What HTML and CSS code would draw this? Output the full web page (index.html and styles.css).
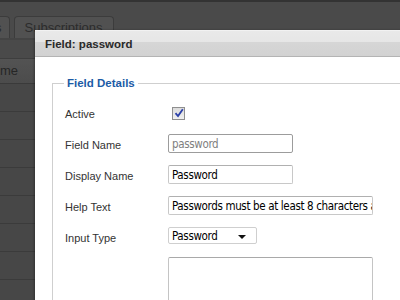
FILE: index.html
```html
<!DOCTYPE html>
<html lang="en">

<head>
    <meta charset="UTF-8">
    <meta name="viewport" content="width=device-width, initial-scale=1.0">
    <title>Field: password</title>
    <link rel="stylesheet" href="styles.css">
</head>

<body>
    <div class="topline"></div>
    <div class="tabs">
        <div class="tab tab-cut">s</div>
        <div class="tab">Subscriptions</div>
    </div>
    <div class="grid">
        <div class="grid-head">me</div>
        <div class="grid-row"></div>
        <div class="grid-row"></div>
        <div class="grid-row"></div>
        <div class="grid-row"></div>
        <div class="grid-row"></div>
        <div class="grid-row"></div>
        <div class="grid-row"></div>
        <div class="grid-row"></div>
    </div>

    <!-- dialog over the list -->
    <div class="dialog">
        <div class="dialog-title">Field: password</div>
        <div class="dialog-body">
            <fieldset class="details">
                <legend>Field Details</legend>
                <div class="row first">
                    <label>Active</label>
                    <span class="check">
                        <svg width="10" height="10" viewBox="0 0 10 10">
                            <path d="M1.5 5.2 L4 8 L8.8 1.2" fill="none" stroke="#2b3fa8" stroke-width="1.8"/>
                        </svg>
                    </span>
                </div>
                <div class="row">
                    <label>Field Name</label>
                    <div class="input disabled">password</div>
                </div>
                <div class="row">
                    <label>Display Name</label>
                    <div class="input">Password</div>
                </div>
                <div class="row">
                    <label>Help Text</label>
                    <div class="input wide">Passwords must be at least 8 characters and contain a number</div>
                </div>
                <div class="row">
                    <label>Input Type</label>
                    <div class="select">Password<span class="arrow"></span></div>
                </div>
                <div class="textarea"></div>
            </fieldset>
        </div>
    </div>
</body>

</html>
```

FILE: styles.css
```css
body {
    margin: 0;
    background: #4a4a4a;
    font-family: "Liberation Sans", Arial, sans-serif;
    overflow: hidden;
    width: 400px;
    height: 300px;
    position: relative;
}

.topline {
    height: 2px;
    background: #333;
}

/* background tabs */
.tabs {
    display: flex;
    gap: 4px;
    height: 22px;
    margin-top: 14px;
    border-bottom: 2px solid #444;
}

.tab {
    background: #515151;
    border: 1px solid #3c3c3c;
    border-bottom: none;
    border-radius: 4px 4px 0 0;
    color: #2c2c2c;
    font-size: 13px;
    line-height: 22px;
    padding: 0 10px;
}

.tab-cut {
    margin-left: -12px;
    padding-left: 6px;
    padding-right: 7px;
}

.grid {
    margin-top: 18px;
}

.grid-head {
    height: 24px;
    line-height: 24px;
    background: linear-gradient(#535353, #4c4c4c);
    border-top: 1px solid #3e3e3e;
    border-bottom: 1px solid #3a3a3a;
    color: #262626;
    font-size: 13px;
}

.grid-row {
    height: 27px;
    background: #474747;
    border-bottom: 1px solid #3b3b3b;
}

/* dialog */
.dialog {
    position: absolute;
    left: 35px;
    top: 30px;
    width: 480px;
    height: 300px;
    background: #fff;
    box-shadow: -1px 0 2px rgba(0, 0, 0, 0.3);
}

.dialog-title {
    height: 25px;
    line-height: 26px;
    padding-left: 10px;
    background: linear-gradient(#e9e9e9 0, #e6e6e6 45%, #d6d6d6 46%, #d2d2d2 100%);
    border-top: 1px solid #f2f2f2;
    border-bottom: 1px solid #b4b4b4;
    font-size: 11.5px;
    font-weight: bold;
    color: #2a2a2a;
}

.dialog-body {
    padding: 19px 0 0 17px;
}

.details {
    margin: 0;
    padding: 7px 0 0 12px;
    border: 1px solid #cfcfcf;
    border-right: none;
    border-bottom: none;
}

.details legend {
    padding: 0 3px;
    margin-left: -1px;
    color: #1c5ba6;
    font-size: 11.5px;
    font-weight: bold;
    line-height: 15px;
}

.row {
    display: flex;
    align-items: center;
    height: 31px;
}

.row.first {
    height: 30px;
}

.row label {
    width: 103px;
    padding-top: 2px;
    font-size: 11px;
    color: #333;
}

.check {
    display: flex;
    align-items: center;
    justify-content: center;
    width: 11px;
    height: 11px;
    margin-left: 4px;
    border: 1px solid #8f8f8f;
    background: linear-gradient(#dcdcdc, #f0f0f0);
}

.input {
    width: 117px;
    height: 17px;
    line-height: 18px;
    padding: 0 3px;
    border: 1px solid #c8c8c8;
    border-top-color: #b0b0b0;
    border-radius: 2px;
    font-family: "DejaVu Sans Condensed", sans-serif;
    font-size: 11.5px;
    letter-spacing: -0.35px;
    color: #000;
    white-space: nowrap;
    overflow: hidden;
}

.input.disabled {
    color: #808080;
    border-color: #9c9c9c;
}

.input.wide {
    width: 197px;
}

.select {
    position: relative;
    width: 81px;
    height: 15px;
    line-height: 16px;
    padding: 0 3px;
    margin-top: -2px;
    border: 1px solid #cfcfcf;
    border-radius: 2px;
    font-family: "DejaVu Sans Condensed", sans-serif;
    font-size: 11.5px;
    letter-spacing: -0.35px;
    color: #000;
}

.arrow {
    position: absolute;
    right: 10px;
    top: 7px;
    border-left: 4px solid transparent;
    border-right: 4px solid transparent;
    border-top: 4px solid #111;
}

.textarea {
    width: 203px;
    height: 60px;
    margin: 5px 0 0 103px;
    border: 1px solid #c4c4c4;
    border-top-color: #a9a9a9;
    border-radius: 2px;
}
```
